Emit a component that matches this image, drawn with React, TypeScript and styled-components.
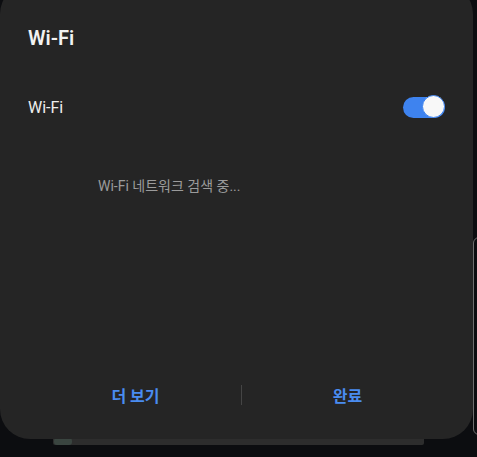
import React, { useState } from "react";
import styled, { createGlobalStyle } from "styled-components";

const GlobalStyle = createGlobalStyle`
  html, body {
    margin: 0;
    padding: 0;
    background: #0c0d10;
    overflow: hidden;
  }
  body {
    font-family: Roboto, "Noto Sans CJK KR", sans-serif;
  }
`;

const Screen = styled.div`
  position: relative;
  width: 477px;
  height: 457px;
  overflow: hidden;
  background: #0c0d10;
`;

// things that lie behind the dialog
const SideCard = styled.div`
  position: absolute;
  left: 473px;
  top: 237px;
  width: 20px;
  height: 196px;
  border: 1px solid #6f6f6f;
  border-radius: 6px;
  background: #0c0d10;
`;

const BottomBar = styled.div`
  position: absolute;
  left: 53px;
  top: 436px;
  width: 371px;
  height: 9px;
  background: #2d2d2d;
  border-radius: 0 0 2px 2px;
`;

const BarIcon = styled.div`
  position: absolute;
  left: 54px;
  top: 438px;
  width: 18px;
  height: 7px;
  background: #3a4540;
  border-radius: 3px;
`;

const Dialog = styled.div`
  position: relative;
  width: 473px;
  height: 455px;
  margin-top: -16px;
  background: #252525;
  border-radius: 30px;
  display: flex;
  flex-direction: column;
  box-sizing: border-box;
  padding: 40px 0 16px;
`;

const Title = styled.h1`
  margin: 0;
  padding: 0 28px;
  font-size: 20px;
  line-height: 28px;
  font-weight: 600;
  color: #f2f2f2;
`;

const ToggleRow = styled.div`
  display: flex;
  align-items: center;
  justify-content: space-between;
  height: 56px;
  margin-top: 27px;
  padding: 0 28px;
`;

const RowLabel = styled.span`
  font-size: 16px;
  color: #eeeeee;
`;

const Track = styled.button<{ $on: boolean }>`
  position: relative;
  width: 42px;
  height: 21px;
  border: none;
  padding: 0;
  border-radius: 11px;
  background: ${(p) => (p.$on ? "#3e83ef" : "#5a5a5a")};
  cursor: pointer;
`;

const Thumb = styled.span<{ $on: boolean }>`
  position: absolute;
  top: -1.5px;
  left: ${(p) => (p.$on ? "19px" : "-1px")};
  width: 21px;
  height: 21px;
  border-radius: 50%;
  background: #f8f8f8;
  border: 1.5px solid #3e83ef;
`;

const Body = styled.div`
  flex: 1;
`;

const Status = styled.p`
  margin: 40px 0 0;
  padding-left: 98px;
  font-size: 14px;
  color: #9b9b9b;
`;

const Actions = styled.div`
  display: flex;
  align-items: center;
  height: 56px;
  padding: 0 20px 0 30px;
`;

const ActionButton = styled.button`
  flex: 1;
  height: 100%;
  background: none;
  border: none;
  font-family: Roboto, "Noto Sans CJK KR", sans-serif;
  font-size: 16px;
  font-weight: 700;
  color: #4a8cf0;
  cursor: pointer;
`;

const Divider = styled.div`
  width: 1px;
  height: 20px;
  background: #454545;
`;

export default function App() {
  const [wifiOn, setWifiOn] = useState(true);

  return (
    <Screen>
      <GlobalStyle />
      <SideCard />
      <BottomBar />
      <BarIcon />
      <Dialog>
        <Title>Wi-Fi</Title>
        <ToggleRow>
          <RowLabel>Wi-Fi</RowLabel>
          <Track $on={wifiOn} onClick={() => setWifiOn(!wifiOn)}>
            <Thumb $on={wifiOn} />
          </Track>
        </ToggleRow>
        <Body>
          <Status>Wi-Fi 네트워크 검색 중...</Status>
        </Body>
        <Actions>
          <ActionButton>더 보기</ActionButton>
          <Divider />
          <ActionButton>완료</ActionButton>
        </Actions>
      </Dialog>
    </Screen>
  );
}
